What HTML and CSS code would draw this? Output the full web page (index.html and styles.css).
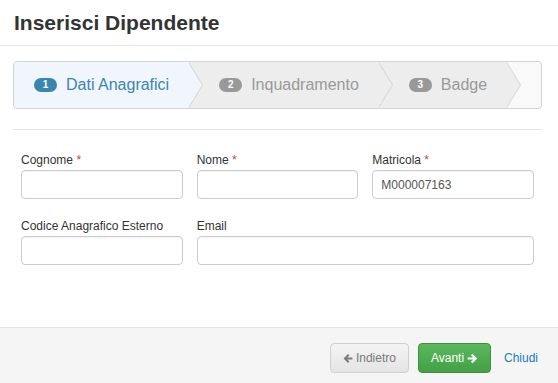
FILE: index.html
```html
<!DOCTYPE html>
<html lang="it">
<head>
  <meta charset="UTF-8">
  <title>Inserisci Dipendente</title>
  <link rel="stylesheet" href="styles.css">
</head>
<body>
  <div class="modal">
    <div class="modal-header">
      <h3>Inserisci Dipendente</h3>
    </div>
    <div class="modal-body">
      <div class="wizard">
        <ul class="steps">
          <li class="active"><span class="badge">1</span>Dati Anagrafici<span class="chevron"></span></li>
          <li><span class="badge">2</span>Inquadramento<span class="chevron"></span></li>
          <li><span class="badge">3</span>Badge<span class="chevron"></span></li>
        </ul>
      </div>
      <hr class="sep">
      <form class="form-grid">
        <div class="field">
          <label>Cognome <span class="req">*</span></label>
          <input type="text">
        </div>
        <div class="field">
          <label>Nome <span class="req">*</span></label>
          <input type="text">
        </div>
        <div class="field">
          <label>Matricola <span class="req">*</span></label>
          <input type="text" value="M000007163">
        </div>
        <div class="field">
          <label>Codice Anagrafico Esterno</label>
          <input type="text">
        </div>
        <div class="field wide">
          <label>Email</label>
          <input type="text">
        </div>
      </form>
    </div>
    <div class="modal-footer">
      <button class="btn btn-default" disabled>
        <svg class="ico" viewBox="0 0 10 10" aria-hidden="true"><path d="M5 .6.6 5 5 9.4 6.4 8 4.3 6H9.4V4H4.3l2.1-2z"/></svg>Indietro
      </button>
      <button class="btn btn-success">Avanti
        <svg class="ico" viewBox="0 0 10 10" aria-hidden="true"><path d="M5 .6 9.4 5 5 9.4 3.6 8l2.1-2H.6V4h5.1L3.6 2z"/></svg>
      </button>
      <a class="btn-link" href="#">Chiudi</a>
    </div>
  </div>
</body>
</html>
```
FILE: styles.css
```css
* {
  box-sizing: border-box;
}
body {
  margin: 0;
  background: #fff;
  color: #333;
  font-family: 'Liberation Sans', Arial, sans-serif;
  font-size: 12px;
}
.modal {
  width: 558px;
  height: 383px;
  display: flex;
  flex-direction: column;
}
.modal-header {
  padding: 11px 14px 11px 14px;
  border-bottom: 1px solid #e5e5e5;
}
.modal-header h3 {
  margin: 0;
  font-size: 21px;
  line-height: 23px;
  font-weight: bold;
  color: #333;
}
.modal-body {
  flex: 1;
  padding: 15px 16px 0 13px;
}
.wizard {
  border: 1px solid #d4d4d4;
  border-radius: 4px;
  background: #f9f9f9;
  height: 48px;
  overflow: hidden;
}
.steps {
  list-style: none;
  margin: 0;
  padding: 0;
  display: flex;
}
.steps li {
  position: relative;
  height: 46px;
  line-height: 46px;
  padding: 0 20px 0 30px;
  background: #ededed;
  color: #999;
  font-size: 16px;
  white-space: nowrap;
}
.steps li:first-child {
  padding-left: 20px;
  border-radius: 4px 0 0 4px;
}
.steps li.active {
  background: #f1f6fc;
  color: #3a87ad;
}
.chevron {
  position: absolute;
  top: 0;
  right: -14px;
  z-index: 1;
  border: 23px solid transparent;
  border-right: 0;
  border-left: 14px solid #d4d4d4;
}
.chevron::before {
  content: "";
  position: absolute;
  top: -23px;
  right: 1px;
  border: 23px solid transparent;
  border-right: 0;
  border-left: 14px solid #ededed;
}
.steps li.active .chevron::before {
  border-left-color: #f1f6fc;
}
.badge {
  display: inline-block;
  vertical-align: 2px;
  margin-right: 9px;
  padding: 1px 8px;
  min-width: 23px;
  border-radius: 8px;
  background: #999;
  color: #fff;
  font-size: 10px;
  font-weight: bold;
  line-height: 12px;
  text-align: center;
}
.steps li.active .badge {
  background: #3a87ad;
}
.sep {
  margin: 20px 0 0 0;
  border: 0;
  border-top: 1px solid #e5e5e5;
}
.form-grid {
  display: grid;
  grid-template-columns: repeat(3, minmax(0, 1fr));
  column-gap: 14px;
  row-gap: 19px;
  padding: 22px 8px 0 8px;
}
.field {
  display: flex;
  flex-direction: column;
  min-width: 0;
}
.field.wide {
  grid-column: span 2;
}
.field label {
  line-height: 17px;
  margin-bottom: 1px;
  color: #333;
}
.req {
  color: #b94a48;
}
.field input {
  width: 100%;
  min-width: 0;
  height: 29px;
  border: 1px solid #ccc;
  border-radius: 4px;
  padding: 4px 8px;
  font-family: 'Liberation Sans', Arial, sans-serif;
  font-size: 12px;
  color: #555;
  box-shadow: inset 0 1px 1px rgba(0, 0, 0, 0.05);
}
.modal-footer {
  height: 56px;
  border-top: 1px solid #e5e5e5;
  background: #f5f5f5;
  display: flex;
  justify-content: flex-end;
  align-items: flex-start;
  gap: 9px;
  padding: 15px 20px 0 0;
}
.btn {
  height: 30px;
  border-radius: 4px;
  font-family: 'Liberation Sans', Arial, sans-serif;
  font-size: 12px;
  padding: 0 12px;
  display: flex;
  align-items: center;
  gap: 3px;
  cursor: pointer;
}
.btn-default {
  width: 79px;
  justify-content: center;
  background: linear-gradient(#f4f4f4, #e4e4e4);
  border: 1px solid #cfcfcf;
  color: #7a7a7a;
}
.btn-success {
  width: 73px;
  justify-content: center;
  background: linear-gradient(#5cb85c, #44a044);
  border: 1px solid #3e8f3e;
  color: #fff;
}
.ico {
  width: 11px;
  height: 11px;
  fill: currentColor;
}
.btn-link {
  line-height: 30px;
  margin-left: 4px;
  color: #1a7bb9;
  text-decoration: none;
  font-size: 12px;
}
```
